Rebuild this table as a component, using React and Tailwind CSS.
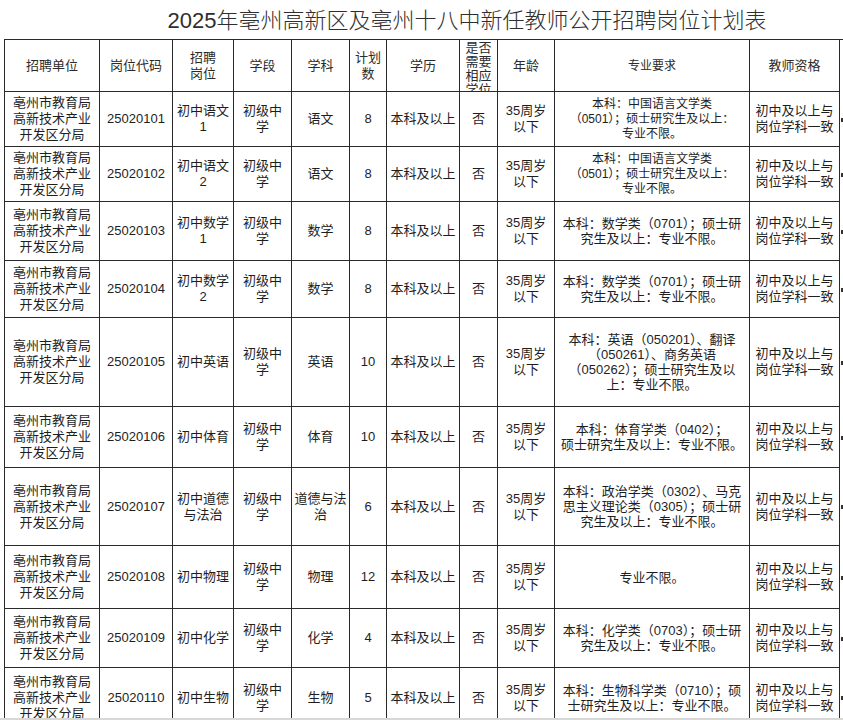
import React from "react";

const FONT = { fontFamily: '"Liberation Sans", "Noto Sans CJK SC", sans-serif' };

const COLS =
  "grid grid-cols-[95px_73px_61px_58px_58px_37px_73px_38px_57px_195px_90px_12px]";

const UNIT = ["亳州市教育局", "高新技术产业", "开发区分局"];
const QUAL = ["初中及以上与", "岗位学科一致"];
const AGE = ["35周岁", "以下"];
const STAGE = ["初级中", "学"];

const rows = [
  { h: "h-[55px]", code: "25020101", post: ["初中语文", "1"], subj: ["语文"], num: "8", small: true,
    major: ["本科：中国语言文学类", "（0501）；硕士研究生及以上：", "专业不限。"] },
  { h: "h-[55px]", code: "25020102", post: ["初中语文", "2"], subj: ["语文"], num: "8", small: true,
    major: ["本科：中国语言文学类", "（0501）；硕士研究生及以上：", "专业不限。"] },
  { h: "h-[59px]", code: "25020103", post: ["初中数学", "1"], subj: ["数学"], num: "8",
    major: ["本科：数学类（0701）；硕士研", "究生及以上：专业不限。"] },
  { h: "h-[57px]", code: "25020104", post: ["初中数学", "2"], subj: ["数学"], num: "8",
    major: ["本科：数学类（0701）；硕士研", "究生及以上：专业不限。"] },
  { h: "h-[89px]", code: "25020105", post: ["初中英语"], subj: ["英语"], num: "10",
    major: ["本科：英语（050201）、翻译", "（050261）、商务英语", "（050262）；硕士研究生及以", "上：专业不限。"] },
  { h: "h-[61px]", code: "25020106", post: ["初中体育"], subj: ["体育"], num: "10",
    major: ["本科：体育学类（0402）；", "硕士研究生及以上：专业不限。"] },
  { h: "h-[78px]", code: "25020107", post: ["初中道德", "与法治"], subj: ["道德与法", "治"], num: "6",
    major: ["本科：政治学类（0302）、马克", "思主义理论类（0305）；硕士研", "究生及以上：专业不限。"] },
  { h: "h-[63px]", code: "25020108", post: ["初中物理"], subj: ["物理"], num: "12",
    major: ["专业不限。"] },
  { h: "h-[59px]", code: "25020109", post: ["初中化学"], subj: ["化学"], num: "4",
    major: ["本科：化学类（0703）；硕士研", "究生及以上：专业不限。"] },
  { h: "h-[60px]", code: "25020110", post: ["初中生物"], subj: ["生物"], num: "5",
    major: ["本科：生物科学类（0710）；硕", "士研究生及以上：专业不限。"] },
];

function Cell({ lines, extra = "", lh = "leading-[16px]" }) {
  return (
    <div
      className={`flex flex-col items-center justify-center overflow-hidden border-r border-b border-[#2a2a2a] text-center ${lh} ${extra}`}
    >
      {lines.map((l, i) => (
        <div key={i} className="whitespace-nowrap">
          {l}
        </div>
      ))}
    </div>
  );
}

function Mark() {
  return (
    <div className="flex items-center">
      <div className="ml-[1px] h-[4px] w-[2px] bg-[#333]" />
    </div>
  );
}

export default function App() {
  return (
    <div className="h-[720px] w-[843px] overflow-hidden bg-[#d8d8d8]" style={FONT}>
      <div className="h-[718px] overflow-hidden bg-white">
        <div className="flex h-[39px] items-center justify-center pl-[91px] pt-[2px] text-[22px] font-light leading-none text-[#2e2e2e]">
          2025年亳州高新区及亳州十八中新任教师公开招聘岗位计划表
        </div>
        <div className="ml-[4px] w-[849px] text-[13px] text-[#1e1e1e]">
          <div className={`${COLS} h-[53px] border-l border-t border-[#2a2a2a] text-[#2b2b2b]`}>
            <Cell lines={["招聘单位"]} />
            <Cell lines={["岗位代码"]} />
            <Cell lines={["招聘", "岗位"]} />
            <Cell lines={["学段"]} />
            <Cell lines={["学科"]} />
            <Cell lines={["计划", "数"]} />
            <Cell lines={["学历"]} />
            <div className="overflow-hidden border-r border-b border-[#2a2a2a] pt-[1px] text-center leading-[14px]">
              <div>是否</div>
              <div>需要</div>
              <div>相应</div>
              <div>学位</div>
            </div>
            <Cell lines={["年龄"]} />
            <Cell lines={["专业要求"]} extra="text-[12px]" />
            <Cell lines={["教师资格"]} />
            <div />
          </div>
          {rows.map((r) => (
            <div key={r.code} className={`${COLS} ${r.h} border-l border-[#2a2a2a]`}>
              <Cell lines={UNIT} />
              <Cell lines={[r.code]} />
              <Cell lines={r.post} />
              <Cell lines={STAGE} />
              <Cell lines={r.subj} />
              <Cell lines={[r.num]} />
              <Cell lines={["本科及以上"]} />
              <Cell lines={["否"]} />
              <Cell lines={AGE} />
              <Cell
                lines={r.major}
                lh="leading-[15px]"
                extra={r.small ? "text-[12px]" : "text-[13px]"}
              />
              <Cell lines={QUAL} />
              <Mark />
            </div>
          ))}
        </div>
      </div>
    </div>
  );
}
